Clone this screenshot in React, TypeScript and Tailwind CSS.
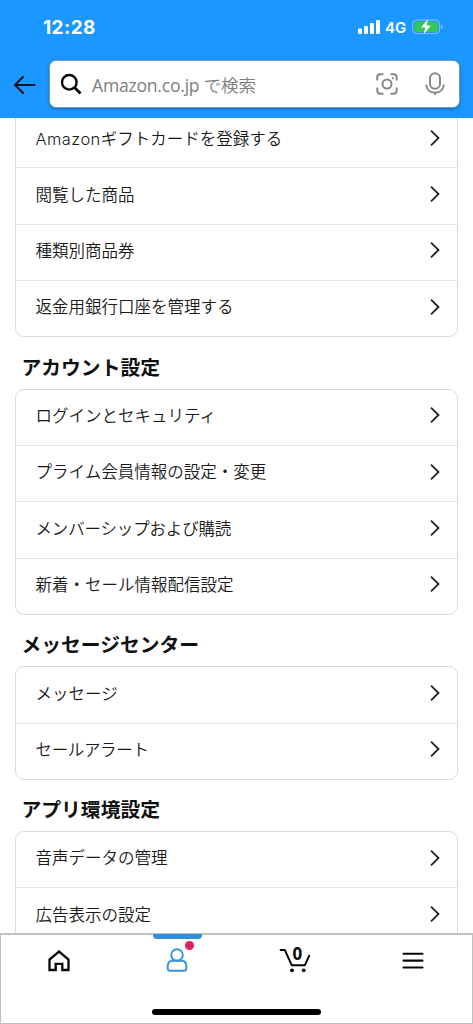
import React from "react";

function Chevron() {
  return (
    <svg width="12" height="18" viewBox="0 0 12 18" fill="none" stroke="#222" strokeWidth="1.8">
      <path d="M2 1.7 9.5 9 2 16.3" />
    </svg>
  );
}

function Card({ items, className = "" }: { items: React.ReactNode[]; className?: string }) {
  return (
    <ul className={`ml-[15px] mr-[15px] shrink-0 rounded-[9px] border border-[#d9dbdb] bg-white ${className}`}>
      {items.map((item, index) => (
        <li
          key={index}
          className="flex h-[56.4px] items-center justify-between border-b border-[#e9e9e9] pl-[19.5px] pr-[16px] last:h-[55px] last:border-b-0"
        >
          <span className="pb-[2.4px] font-['Inter','Noto_Sans_CJK_JP',sans-serif] text-[16.5px] leading-6 font-[350] whitespace-nowrap text-[#1a1a1a]">
            {item}
          </span>
          <span className="pb-[4px]">
            <Chevron />
          </span>
        </li>
      ))}
    </ul>
  );
}

function Heading({ children }: { children: React.ReactNode }) {
  return (
    <h2 className="flex h-[51.4px] shrink-0 items-center pt-[8px] pl-[21.5px] text-[19.8px] leading-7 font-bold text-[#0f1111]">
      {children}
    </h2>
  );
}

function StatusBar() {
  return (
    <div className="flex h-[54px] items-center justify-between pr-[30px] pl-[43px] text-white">
      <span className="pt-[2px] font-['Inter'] text-[19px] leading-6 font-bold tracking-[0.4px]">12:28</span>
      <div className="flex items-center">
        <svg width="22" height="14" viewBox="0 0 22 14" fill="white">
          <rect x="0" y="8.5" width="4" height="5.5" rx="1.1" />
          <rect x="6" y="6" width="4" height="8" rx="1.1" />
          <rect x="12" y="3" width="4" height="11" rx="1.1" />
          <rect x="18" y="0" width="4" height="14" rx="1.1" />
        </svg>
        <span className="ml-[5px] w-[22px] pt-px font-['Inter'] text-[15px] leading-5 font-semibold">4G</span>
        <svg className="ml-[5px]" width="31" height="16" viewBox="0 0 31 16">
          <rect x=".6" y="1" width="27" height="13.6" rx="4" fill="none" stroke="#8dbff0" strokeWidth="1" />
          <rect x="2.3" y="2.7" width="23.6" height="10.2" rx="2.4" fill="#35c65a" />
          <path d="M29 5.5c2.2 1 2.2 3.8 0 4.8Z" fill="#8dbff0" />
          <path d="M16 0 9 8.5h4.3L11.7 15.2 19 6.6h-4.5L16 0Z" fill="white" />
        </svg>
      </div>
    </div>
  );
}

function SearchRow() {
  return (
    <div className="flex h-[64px] items-start pt-[6px] pl-[13px]">
      <svg className="mt-[15px]" width="23" height="20" viewBox="0 0 23 20" fill="none" stroke="#081426" strokeWidth="2.1" strokeLinecap="round" strokeLinejoin="round">
        <path d="M10 2 2 10l8 8M2 10h19.5" />
      </svg>
      <div className="ml-[13px] flex h-[48px] w-[411px] items-center rounded-[7px] border border-[#729cba] bg-white pl-[10px] shadow-[0_1px_3px_rgba(0,40,80,0.45)]">
        <svg width="22" height="22" viewBox="0 0 22 22" fill="none" stroke="#090909" strokeWidth="2.4">
          <circle cx="9.3" cy="9.3" r="7.3" />
          <path d="m14.5 14.5 6 6" strokeWidth="2.8" />
        </svg>
        <span className="ml-[10px] w-[264px] pt-[2px] font-['Open_Sans','Noto_Sans_CJK_JP',sans-serif] text-[17.6px] leading-6 tracking-[-0.24px] whitespace-nowrap text-[#7c8080]">
          Amazon.co.jp <span className="font-['Noto_Sans_CJK_JP',sans-serif] font-[350]">で検索</span>
        </span>
        <svg className="ml-[20px]" width="22" height="22" viewBox="0 0 22 22" fill="none" stroke="#858989" strokeWidth="2">
          <path d="M1.2 7.5v-3q0-3.2 3.2-3.2h3M14.5 1.3h3q3.2 0 3.2 3.2v3M20.7 14.5v3q0 3.2-3.2 3.2h-3M7.5 20.7h-3q-3.2 0-3.2-3.2v-3" />
          <circle cx="11" cy="11" r="4.5" />
          <circle cx="16.8" cy="5.2" r="1.1" fill="#858989" stroke="none" />
        </svg>
        <svg className="ml-[27px]" width="20" height="24" viewBox="0 0 20 24" fill="none" stroke="#858989" strokeWidth="2">
          <rect x="5" y="1.3" width="10" height="15.5" rx="5" />
          <path d="M1.2 12.5c.3 5 3.8 8.2 8.8 8.2s8.5-3.2 8.8-8.2M10 20.7V23" />
        </svg>
      </div>
    </div>
  );
}

function BottomNav() {
  return (
    <nav className="relative flex h-[91px] shrink-0 border border-t-2 border-[#bfc2c2] bg-white">
      <div className="flex w-[117px] justify-center pt-[15px] pr-[2px]">
        <svg width="22" height="22" viewBox="0 0 22 22" fill="none" stroke="#080808" strokeWidth="2.3">
          <path d="M1.5 20V9.5L11 1.6l9.5 7.9V20h-6.2v-6.2H7.7V20Z" />
        </svg>
      </div>
      <div className="relative flex w-[118px] justify-center pt-[13px]">
        <span className="absolute top-[-1px] left-[35px] h-[5px] w-[49px] rounded-b-[4px] bg-[#308fdd]" />
        <svg width="22" height="24" viewBox="0 0 22 24" fill="none" stroke="#3292df" strokeWidth="1.9">
          <circle cx="11" cy="7" r="5.8" />
          <path d="M6.5 12.8h9c3.2 0 4.8 2.3 4.8 5.5v2.2c0 1.4-.8 2.2-2.2 2.2H3.9c-1.4 0-2.2-.8-2.2-2.2v-2.2c0-3.2 1.6-5.5 4.8-5.5Z" />
        </svg>
        <span className="absolute top-[6px] left-[67px] size-[9px] rounded-full bg-[#d92365]" />
      </div>
      <div className="relative flex w-[118px] justify-center pt-[13px]">
        <svg width="32" height="26" viewBox="0 0 32 26" fill="none" stroke="#080808" strokeWidth="2">
          <path d="M.8 2h5l7 15.3h13L30.5 7" strokeLinejoin="round" />
          <circle cx="13" cy="22.3" r="1.9" fill="#080808" stroke="none" />
          <circle cx="24.7" cy="22.3" r="1.9" fill="#080808" stroke="none" />
        </svg>
        <span className="absolute top-[9px] left-[56.5px] font-['Open_Sans',sans-serif] text-[17px] leading-5 font-bold text-[#080808]">0</span>
      </div>
      <div className="flex w-[118px] justify-center pt-[17px]">
        <svg width="22" height="18" viewBox="0 0 22 18" fill="none" stroke="#080808" strokeWidth="2.1" strokeLinecap="round">
          <path d="M1.5 1.7h19M1.5 8.6h19M1.5 15.5h19" />
        </svg>
      </div>
      <span className="absolute top-[74px] left-[151px] h-[6px] w-[169px] rounded-full bg-black" />
    </nav>
  );
}

export default function App() {
  return (
    <div className="flex h-[1024px] w-[473px] flex-col overflow-hidden bg-white font-['Noto_Sans_CJK_JP',sans-serif]">
      <header className="h-[118px] shrink-0 bg-[#1a98ff]">
        <StatusBar />
        <SearchRow />
      </header>
      <main className="flex min-h-0 flex-1 flex-col overflow-hidden">
        <Card
          className="mt-[-7px]"
          items={[
            <>
              <span className="tracking-[0.4px]">Amazon</span>ギフトカードを登録する
            </>,
            "閲覧した商品",
            "種類別商品券",
            "返金用銀行口座を管理する",
          ]}
        />
        <Heading>アカウント設定</Heading>
        <Card
          items={[
            "ログインとセキュリティ",
            "プライム会員情報の設定・変更",
            <span className="tracking-[-0.17px]">メンバーシップおよび購読</span>,
            "新着・セール情報配信設定",
          ]}
        />
        <Heading>メッセージセンター</Heading>
        <Card items={["メッセージ", <span className="tracking-[-0.35px]">セールアラート</span>]} />
        <Heading>アプリ環境設定</Heading>
        <Card className="pb-4" items={["音声データの管理", "広告表示の設定"]} />
      </main>
      <BottomNav />
    </div>
  );
}
